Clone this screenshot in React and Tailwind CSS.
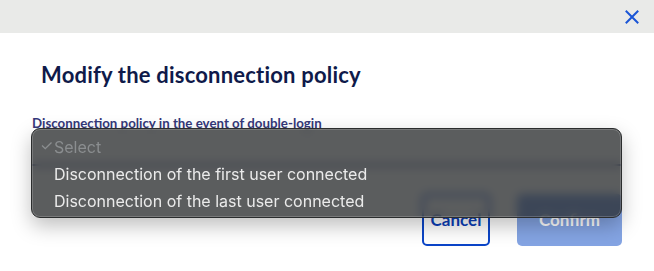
import React from "react";

export default function App() {
  return (
    <div className="relative w-[654px] h-[271px] bg-white overflow-hidden" style={{ fontFamily: "Lato, 'Liberation Sans', sans-serif" }}>
      <div className="h-[33px] bg-[#e9eae8] flex items-center justify-end pr-[15px]">
        <svg width="14" height="14" viewBox="0 0 14 14" fill="none" stroke="#1a55d6" strokeWidth="2" strokeLinecap="square">
          <path d="M1.5 1.5L12.5 12.5M12.5 1.5L1.5 12.5" />
        </svg>
      </div>
      <div className="px-[32px]">
        <h1 className="mt-[28px] pl-[9px] text-[22px] leading-[28px] font-bold text-[#0f1a4a] tracking-[0.2px]">
          Modify the disconnection policy
        </h1>
        <div className="mt-[26px] text-[13.3px] leading-[16px] font-bold text-[#34387a]">
          Disconnection policy in the event of double-login
        </div>
        <div className="h-[35px] border-b-2 border-[#3a4a8a] bg-white" />
        <div className="mt-[28px] flex justify-end gap-[27px]">
          <button className="w-[68px] h-[52px] rounded-[5px] border-2 border-[#0b45c8] text-[#0b3fb8] font-bold text-[17px]">
            Cancel
          </button>
          <button className="w-[105px] h-[52px] rounded-[5px] bg-[#84a4e3] text-white font-bold text-[17px]">
            Confirm
          </button>
        </div>
      </div>

      <div
        className="absolute left-[31px] top-[128px] w-[591px] h-[90px] rounded-[9px] border border-[#2b2d2e] bg-[rgba(36,39,40,0.75)] backdrop-blur-[5px] shadow-[0_8px_20px_rgba(0,0,0,0.25),inset_0_0_0_1px_rgba(255,255,255,0.18)] pt-[4px] text-[16px]"
        style={{ fontFamily: "Inter, 'Liberation Sans', Arial, sans-serif" }}
      >
        <div className="h-[27px] flex items-center text-[#8b8e90]">
          <span className="w-[22px] pl-[8px] text-[15px]">✓</span>
          <span>Select</span>
        </div>
        <div className="h-[27px] flex items-center text-[#ebebeb] pl-[22px]">
          Disconnection of the first user connected
        </div>
        <div className="h-[27px] flex items-center text-[#ebebeb] pl-[22px]">
          Disconnection of the last user connected
        </div>
      </div>
    </div>
  );
}
